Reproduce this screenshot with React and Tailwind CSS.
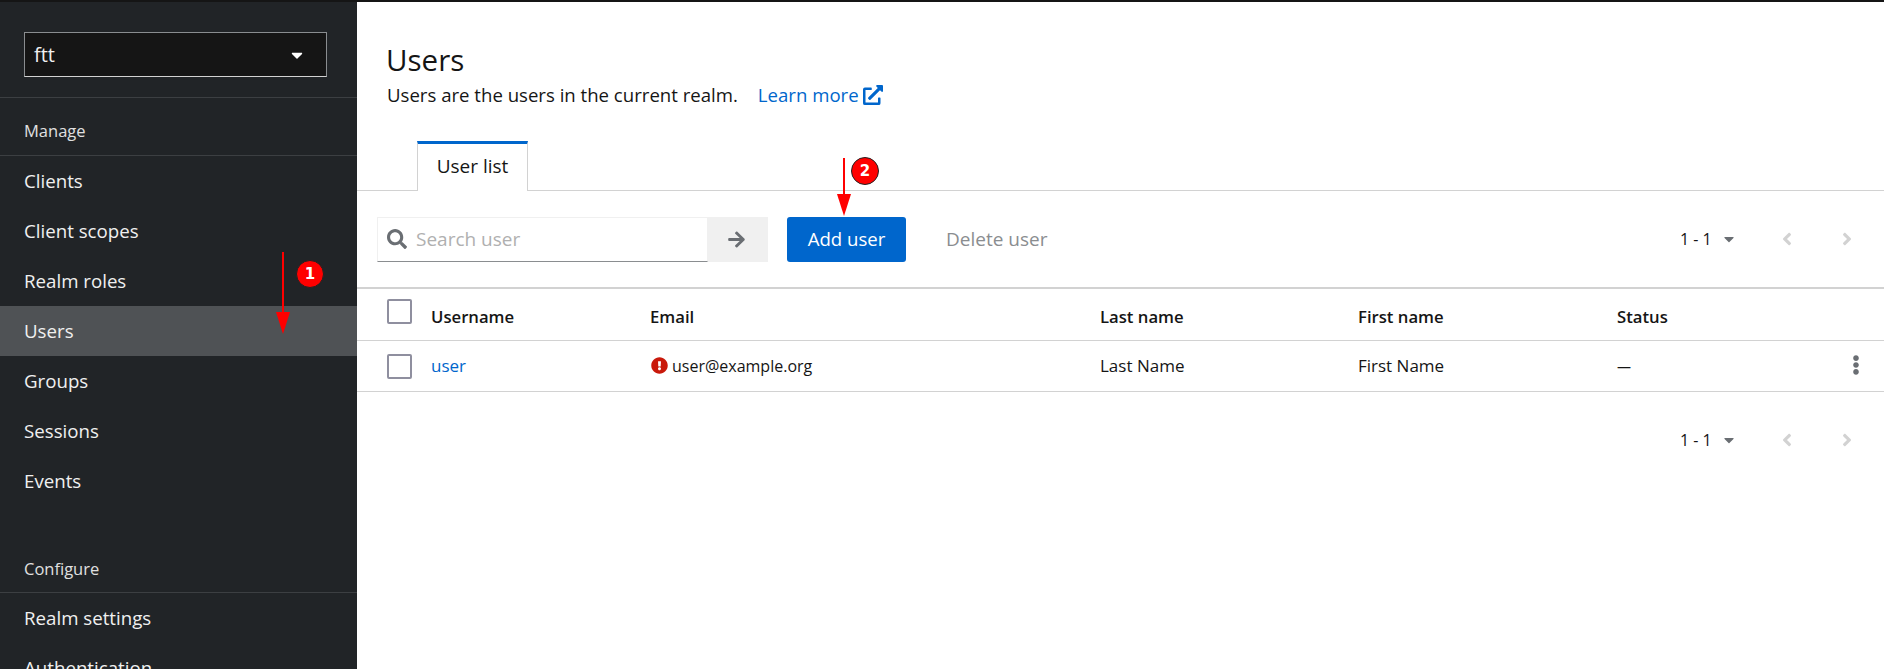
import React from "react";
import { FaSearch, FaArrowRight, FaExternalLinkAlt, FaExclamationCircle, FaEllipsisV, FaCaretDown, FaAngleLeft, FaAngleRight } from "react-icons/fa";

function NavItem({ label, active }) {
  return (
    <div className={`h-[50px] flex items-center px-6 text-[18.7px] text-[#f0f0f0] ${active ? "bg-[#4f5255]" : ""}`}>
      {label}
    </div>
  );
}

function Pagination() {
  return (
    <div className="flex items-center text-[#151515] text-[16px]">
      <span className="w-[30px] text-center whitespace-nowrap">1 - 1</span>
      <FaCaretDown className="ml-[12px] w-[14px] h-[16px] text-[#6a6e73]" />
      <FaAngleLeft className="ml-[45px] w-[12px] h-[20px] text-[#d2d2d2]" />
      <FaAngleRight className="ml-[48px] w-[12px] h-[20px] text-[#d2d2d2]" />
    </div>
  );
}

function Checkbox() {
  return <div className="w-[25px] h-[25px] rounded-[2px] border-2 border-[#8f8f9f] bg-white" />;
}

function Annotation({ x, y1, y2, cx, cy, n }) {
  return (
    <>
      <svg className="absolute left-0 top-0 pointer-events-none" width="1884" height="669">
        <line x1={x} y1={y1} x2={x} y2={y2 - 18} stroke="#ff0000" strokeWidth="2" />
        <polygon points={`${x - 7},${y2 - 22} ${x + 7},${y2 - 22} ${x},${y2}`} fill="#ff0000" />
      </svg>
      <div
        className="absolute w-[28px] h-[28px] rounded-full bg-[#ff0000] border border-[#222] text-white flex items-center justify-center text-[15px] font-bold font-['DejaVu_Sans',sans-serif]"
        style={{ left: cx - 14, top: cy - 14 }}
      >
        {n}
      </div>
    </>
  );
}

const cols = "grid grid-cols-[75px_219px_449px_258px_259px_1fr]";

export default function App() {
  return (
    <div className="relative h-[669px] w-[1884px] overflow-hidden bg-white flex flex-col font-['Open_Sans',sans-serif] text-[#151515]">
      <div className="h-[2px] bg-[#151515] shrink-0" />
      <div className="flex flex-1 min-h-0">
        <aside className="w-[357px] shrink-0 bg-[#212427] overflow-hidden">
          <div className="pt-[30px] pb-[20px] pl-6 pr-[30px] border-b border-[#3c3f42] h-[96px]">
            <div className="h-[45px] bg-[#151515] border border-[#8a8d90] border-b-[#d2d2d2] flex items-center justify-between pl-[9px] pr-[22px] text-[20px] text-[#f0f0f0]">
              <span>ftt</span>
              <FaCaretDown className="w-[14px] h-[18px] text-white" />
            </div>
          </div>
          <div className="h-[58px] px-6 pt-[22px] border-b border-[#3c3f42] text-[16.5px] leading-[22px] text-[#e0e0e0]">Manage</div>
          {["Clients", "Client scopes", "Realm roles"].map((l) => <NavItem key={l} label={l} />)}
          <NavItem label="Users" active />
          {["Groups", "Sessions", "Events"].map((l) => <NavItem key={l} label={l} />)}
          <div className="h-[87px] px-6 pt-[52px] border-b border-[#3c3f42] text-[16.5px] leading-[22px] text-[#e0e0e0]">Configure</div>
          {["Realm settings", "Authentication"].map((l) => <NavItem key={l} label={l} />)}
        </aside>
        <main className="flex-1 min-w-0">
          <div className="pl-[30px] pt-[38px] h-[139px]">
            <h1 className="text-[29.5px] leading-[40px] -ml-[1px]">Users</h1>
            <div className="flex items-center text-[18.6px] leading-[30px]">
              <span>Users are the users in the current realm.</span>
              <a className="ml-5 flex items-center gap-[4px] text-[#0066cc]">Learn more <FaExternalLinkAlt className="w-[20px] h-[20px]" /></a>
            </div>
          </div>
          <div className="h-[50px] border-b border-[#d2d2d2] pl-[60px] flex">
            <div className="w-[111px] h-[50px] pb-[3px] border-x border-[#d2d2d2] border-t-[3px] border-t-[#0066cc] bg-white flex items-center justify-center text-[19px]">User list</div>
          </div>
          <div className="h-[98px] border-b-2 border-[#d2d2d2] flex items-center pl-[20px] pr-[31px]">
            <div className="w-[331px] h-[45px] border border-[#f0f0f0] border-b-[#8a8d90] flex items-center pl-[9px] text-[19px] text-[#b0b0b0]">
              <FaSearch className="w-[20px] h-[20px] text-[#6a6e73] mr-[9px]" />
              Search user
            </div>
            <div className="w-[60px] h-[45px] pr-[3px] bg-[#f0f0f0] flex items-center justify-center">
              <FaArrowRight className="w-[19px] h-[19px] text-[#6a6e73]" />
            </div>
            <button className="ml-[19px] w-[119px] h-[45px] rounded-[3px] bg-[#0066cc] text-white text-[18.6px]">Add user</button>
            <span className="ml-[40px] text-[19px] text-[#8a8d90]">Delete user</span>
            <div className="ml-auto"><Pagination /></div>
          </div>
          <div className={`${cols} h-[52px] items-center border-b border-[#d2d2d2] text-[16.7px] font-semibold`}>
            <div className="pl-[30px] -mt-[6px]"><Checkbox /></div>
            <div className="pt-[4px] -ml-[1px]">Username</div>
            <div className="pt-[4px] -ml-[1px]">Email</div>
            <div className="pt-[4px]">Last name</div>
            <div className="pt-[4px]">First name</div>
            <div className="pt-[4px]">Status</div>
          </div>
          <div className={`${cols} h-[51px] items-center border-b border-[#d2d2d2] text-[17px]`}>
            <div className="pl-[30px]"><Checkbox /></div>
            <div className="text-[#0066cc] -ml-[1px]">user</div>
            <div className="flex items-center gap-[4px] text-[16px]"><FaExclamationCircle className="w-[17px] h-[17px] text-[#c9190b] -mt-[2px]" />user@example.org</div>
            <div>Last Name</div>
            <div>First Name</div>
            <div className="flex items-center justify-between pr-[19px]">
              <span className="text-[14px]">—</span>
              <FaEllipsisV className="w-[18px] h-[20px] text-[#6a6e73] -mt-[3px]" />
            </div>
          </div>
          <div className="h-[95px] flex items-center justify-end pr-[31px]"><Pagination /></div>
        </main>
      </div>
      <Annotation x={283} y1={252} y2={334} cx={310} cy={274} n={1} />
      <Annotation x={844} y1={158} y2={216} cx={865} cy={171} n={2} />
    </div>
  );
}
